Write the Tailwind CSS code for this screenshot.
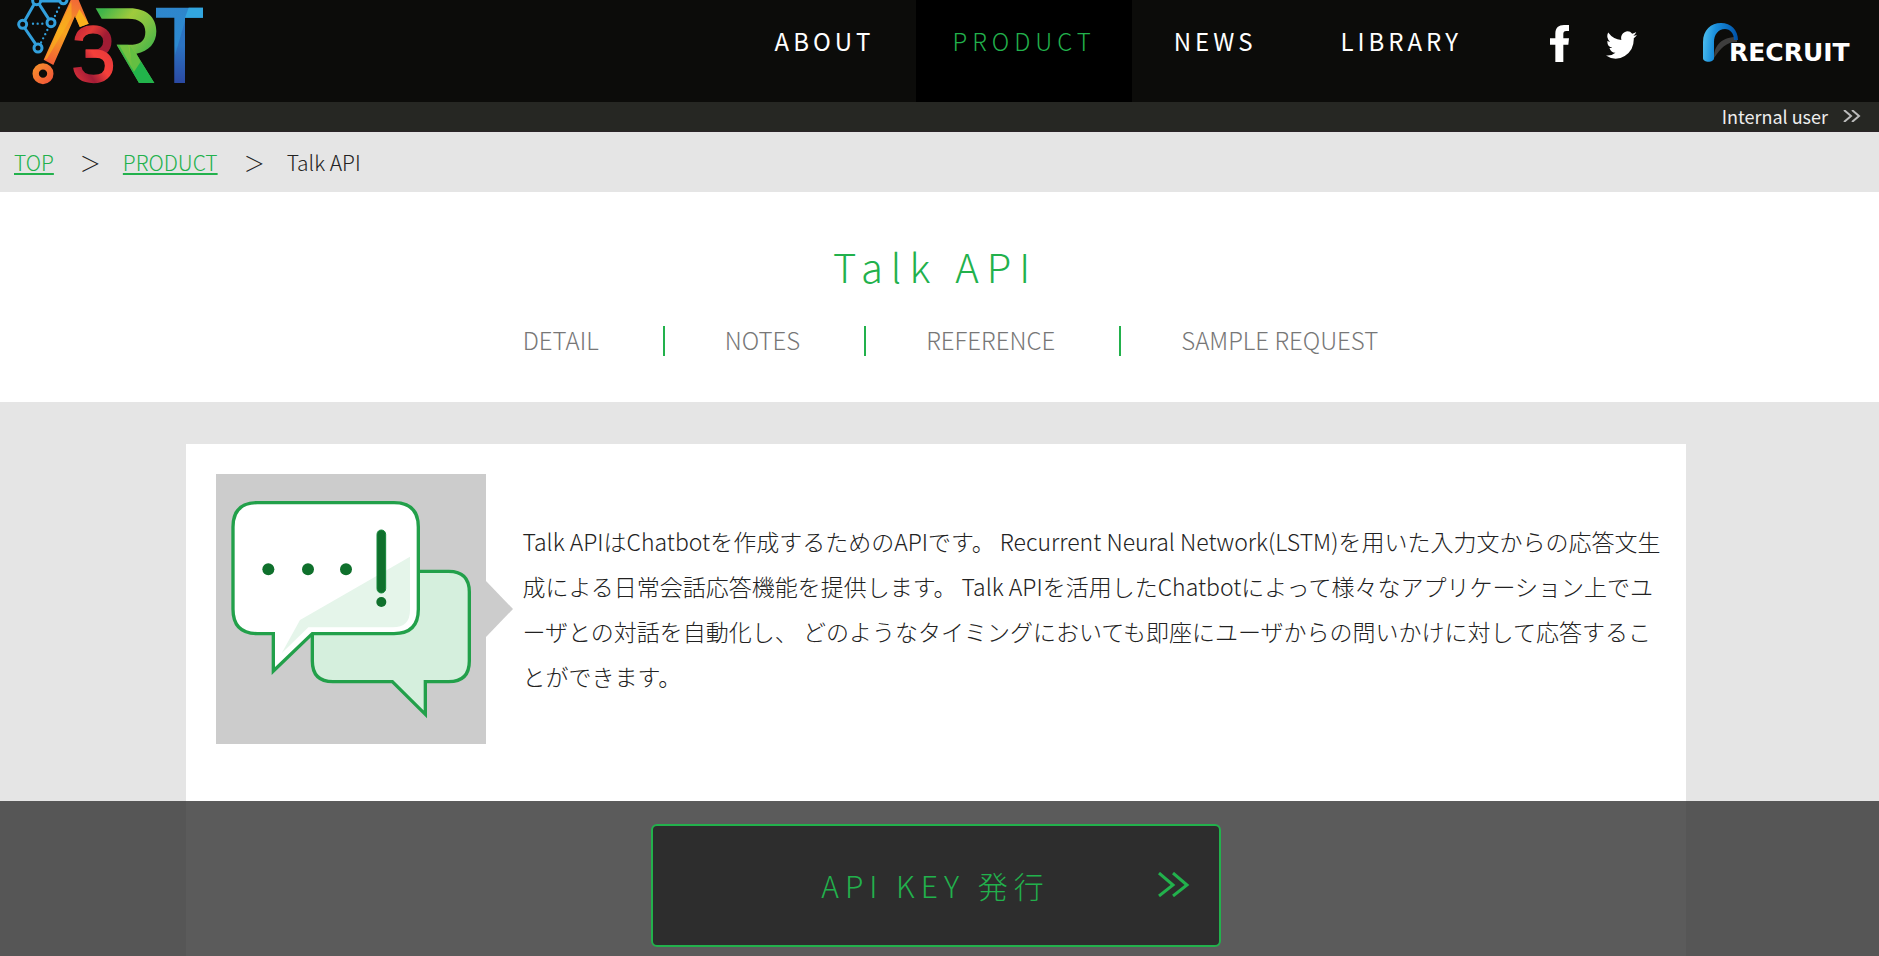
<!DOCTYPE html>
<html lang="ja">
<head>
<meta charset="utf-8">
<meta name="viewport" content="width=device-width, initial-scale=1">
<title>Talk API | A3RT</title>
<script src="https://cdn.jsdelivr.net/npm/@tailwindcss/browser@4"></script>
</head>
<body class="min-h-screen overflow-x-hidden bg-[#e5e5e5] font-['Noto_Sans_CJK_JP','Noto_Sans',sans-serif] font-light text-[#222]">

<header>
  <div class="flex h-[102px] items-start justify-between bg-[#0c0c0a] pr-6">
    <a href="#" aria-label="A3RT" class="block">
      <svg class="h-[102px] w-[220px]" viewBox="0 0 660 306" fill="none">
        <defs>
          <linearGradient id="a" x1="225" y1="0" x2="140" y2="190" gradientUnits="userSpaceOnUse"><stop stop-color="#f26a36"/><stop offset=".5" stop-color="#f8a51f"/><stop offset="1" stop-color="#f15a38"/></linearGradient>
          <linearGradient id="o" x1="100" y1="190" x2="160" y2="250" gradientUnits="userSpaceOnUse"><stop stop-color="#f7942a"/><stop offset="1" stop-color="#f1503a"/></linearGradient>
          <linearGradient id="t1" x1="230" y1="80" x2="330" y2="150" gradientUnits="userSpaceOnUse"><stop stop-color="#c3263a"/><stop offset=".35" stop-color="#e23a36"/><stop offset=".7" stop-color="#a01c34"/></linearGradient>
          <linearGradient id="t2" x1="340" y1="160" x2="220" y2="240" gradientUnits="userSpaceOnUse"><stop stop-color="#e5383a"/><stop offset=".35" stop-color="#f6403a"/><stop offset=".65" stop-color="#a21c36"/><stop offset="1" stop-color="#e0333a"/></linearGradient>
          <linearGradient id="r1" x1="300" y1="40" x2="440" y2="160" gradientUnits="userSpaceOnUse"><stop stop-color="#3fb54a"/><stop offset=".4" stop-color="#a0cb3c"/><stop offset=".7" stop-color="#7fc242"/><stop offset="1" stop-color="#4cb648"/></linearGradient>
          <linearGradient id="b1" x1="540" y1="25" x2="540" y2="248" gradientUnits="userSpaceOnUse"><stop stop-color="#2e86cc"/><stop offset=".5" stop-color="#2d8ad0"/><stop offset="1" stop-color="#2b4aa0"/></linearGradient>
        </defs>
        <g stroke="#32a0dc" stroke-width="9">
          <path d="M104 10 74 62M74 84l34 50M116 10l31 48M122 3h56"/>
          <circle cx="68" cy="73" r="12"/><circle cx="153" cy="68" r="12"/><circle cx="114" cy="144" r="12"/><circle cx="110" cy="2" r="12"/><circle cx="190" cy="0" r="11"/>
          <path stroke-width="7" stroke-linecap="round" stroke-dasharray="0 14" d="M99 71h42M165 48l18-38M142 90l-20 40"/>
        </g>
        <path fill="url(#a)" d="M212 0h24l30 71-27 10-14-32-65 146-29-16z"/>
        <path fill="#f9b81a" d="m215 52-74 124-9 4 82-176z" opacity=".55"/>
        <path fill="#fbb01c" d="m238 28-11 24 13 29 26-10z"/>
        <circle cx="129" cy="221" r="22" stroke="url(#o)" stroke-width="19"/>
        <path stroke="url(#t1)" stroke-width="25" d="M236 122C238 98 256 88 279 88c28 0 43 15 43 36 0 22-16 37-37 37h-28"/>
        <path stroke="url(#t2)" stroke-width="25" d="M257 161h30c24 0 40 14 40 36 0 24-18 40-46 40-29 0-46-12-49-35"/>
        <path fill="url(#r1)" d="M287 25h102c50 0 80 27 80 69 0 35-22 60-60 67l54 88h-46l-67-115h48c26-1 38-15 38-38 0-26-18-40-51-40h-80z"/>
        <path fill="#2fb34a" d="m350 134 35 0 16 88 16 27z" opacity=".75"/>
        <path fill="#22b34b" d="m388 134 20 27 55 88h-46l-20-35z"/>
        <path fill="#a5cc3a" d="m358 136 32-1 18 25 14 25-20 30z" opacity=".5"/>
        <path fill="url(#b1)" d="M468 23h141v30h-54v196h-32V53h-55z"/>
        <path fill="#32a6df" d="M566 23h43v30h-54z"/>
        <path fill="#2b4aa8" d="M555 53v10l-32 110v76h32z" opacity=".35"/>
      </svg>
    </a>
    <div class="flex items-start">
      <nav class="flex text-2xl leading-[82px] tracking-[4px] text-white" aria-label="Main">
        <a href="#" class="h-[102px] px-[42px] font-normal">ABOUT</a>
        <a href="#" class="h-[102px] bg-black px-9 tracking-[5px] text-[#22b14c]" aria-current="page">PRODUCT</a>
        <a href="#" class="h-[102px] px-[42px] font-normal">NEWS</a>
        <a href="#" class="h-[102px] px-[42px] font-normal">LIBRARY</a>
      </nav>
      <div class="flex items-start pt-[22px] pl-[46px]">
        <a href="#" aria-label="Facebook" class="mt-[3px]">
          <svg class="h-[37px] w-[19px]" viewBox="0 0 57 111" fill="#fff"><path d="M57 0v18H49c-8 0-9 4-9 10v12h17l-2 19H40v52H16V59H0V40h16V26C16 8 26 0 42 0z"/></svg>
        </a>
        <a href="#" aria-label="Twitter" class="mt-[9px] ml-[37px]">
          <svg class="h-7 w-[31px]" viewBox="0 2 24 20" preserveAspectRatio="none" fill="#fff"><path d="M24 4.600a10 10 0 0 1-2.800.8 5 5 0 0 0 2.200-2.700 10 10 0 0 1-3.100 1.200 4.900 4.900 0 0 0-8.400 4.500A14 14 0 0 1 1.700 3.100a4.900 4.900 0 0 0 1.500 6.600 5 5 0 0 1-2.200-.6 4.900 4.900 0 0 0 3.900 4.900 5 5 0 0 1-2.200.1 4.900 4.900 0 0 0 4.600 3.400A10 10 0 0 1 0 19.500 14 14 0 0 0 21.500 7.100 10 10 0 0 0 24 4.600z"/></svg>
        </a>
        <a href="#" aria-label="RECRUIT" class="ml-[66px]">
          <svg class="h-12 w-[152px]" viewBox="0 0 152 48">
            <defs>
              <linearGradient id="rc" x1="0" y1="10" x2="34" y2="14" gradientUnits="userSpaceOnUse"><stop stop-color="#4fc0ee"/><stop offset=".35" stop-color="#1a8fdc"/><stop offset="1" stop-color="#0052a8"/></linearGradient>
            </defs>
            <path fill="#3d3d3d" d="M11 36C11 22 20 15 34 15v5c-11 0-16 6-23 16z"/>
            <path fill="url(#rc)" d="M0 36V20C0 8 8 1 18 1s17 7 17 17h-4c0-7-4-11-9-11-7 0-11 6-11 13v16c0 5-11 5-11 0z"/>
            <text x="26" y="39" fill="#fff" font-family="DejaVu Sans" font-weight="700" font-size="25">RECRUIT</text>
          </svg>
        </a>
      </div>
    </div>
  </div>
  <div class="flex h-[30px] items-center justify-end border-b border-[#2a2428] bg-[#262723] pr-[18px] pb-0.5">
    <a href="#" class="flex items-center gap-[15px] text-lg leading-7 font-normal text-[#eee]">Internal user
      <svg class="h-3 w-[18px]" viewBox="0 0 18 12" fill="none" stroke="#bbb" stroke-width="2"><path d="m1 0 7 6-7 6M9 0l7 6-7 6"/></svg>
    </a>
  </div>
</header>

<nav aria-label="Breadcrumb" class="bg-[#e5e5e5]">
  <ol class="flex h-[60px] items-center pl-[14px] text-[21px] leading-8">
    <li><a href="#" class="text-[#22b14c] underline decoration-2 underline-offset-2">TOP</a></li>
    <li aria-hidden="true" class="w-[69px] pl-1 text-center">＞</li>
    <li><a href="#" class="text-[#22b14c] underline decoration-2 underline-offset-2">PRODUCT</a></li>
    <li aria-hidden="true" class="w-[69px] pl-1 text-center">＞</li>
    <li aria-current="page">Talk API</li>
  </ol>
</nav>

<main>
  <section class="flex h-[210px] flex-col items-center bg-white pt-11 pr-2">
    <h1 class="text-[40px] leading-[60px] font-light tracking-[8px] text-[#22b14c]">Talk API</h1>
    <ul class="mt-[30px] flex divide-x-2 divide-[#22b14c] pl-[34px] text-2xl leading-7 text-[#777]">
      <li class="pr-16 pb-0.5 pl-[60px]"><a href="#detail">DETAIL</a></li>
      <li class="pr-16 pb-0.5 pl-[60px]"><a href="#notes">NOTES</a></li>
      <li class="pr-16 pb-0.5 pl-[60px]"><a href="#reference">REFERENCE</a></li>
      <li class="pr-16 pb-0.5 pl-[60px]"><a href="#sample">SAMPLE REQUEST</a></li>
    </ul>
  </section>

  <div class="pt-[42px] pr-2">
    <article id="detail" class="mx-auto flex min-h-[512px] max-w-[1500px] items-start bg-white py-[30px] pr-[22px] pl-[30px]">
      <div class="flex shrink-0 items-center">
        <svg class="size-[270px] bg-[#ccc]" viewBox="0 0 810 810" fill="none" role="img" aria-label="Talk API">
          <g stroke="#22a04a" stroke-width="10">
            <path fill="#d5efdd" d="M350 292H698q62 0 62 62v207q0 62-62 62H628v98L529 623H351q-62 0-62-62V350z"/>
            <path fill="#fff" d="M124 86H534q73 0 73 73v247q0 73-73 73H289L172 591V479H124q-73 0-73-73V159q0-73 73-73z"/>
          </g>
          <path fill="#e5f5ea" d="M582 248v160q0 52-52 52H277l-80 78 55-100z"/>
          <g fill="#0f702c">
            <circle cx="157" cy="286" r="18"/><circle cx="276" cy="286" r="18"/><circle cx="390" cy="286" r="18"/><circle cx="496" cy="384" r="15"/>
            <rect x="483" y="168" width="26" height="189" rx="13" stroke="#15883a" stroke-width="3"/>
          </g>
        </svg>
        <svg class="h-14 w-[27px]" viewBox="0 0 27 56" fill="#ccc" aria-hidden="true"><path d="M0 0l27 28L0 56z"/></svg>
      </div>
      <p class="mt-[45px] ml-[10px] flex-1 text-[23px] leading-[45px]">Talk APIはChatbotを作成するためのAPIです。 Recurrent Neural Network(LSTM)を用いた入力文からの応答文生成による日常会話応答機能を提供します。 Talk APIを活用したChatbotによって様々なアプリケーション上でユーザとの対話を自動化し、 どのようなタイミングにおいても即座にユーザからの問いかけに対して応答することができます。</p>
    </article>
  </div>
</main>

<div class="fixed inset-x-0 bottom-0 flex h-[155px] justify-center bg-[#323232]/80 pt-[23px] pr-2">
  <button type="button" class="relative h-[123px] w-[570px] rounded-md border-2 border-[#22b14c] bg-[#2d2d2d] pb-0.5 text-3xl font-light tracking-[6px] text-[#22b14c]">API KEY 発行
    <svg class="absolute top-[46px] right-[29px] h-[25px] w-8" viewBox="0 0 32 25" fill="none" stroke="#22b14c" stroke-width="3"><path d="m1 1 14 12L1 24M15 1l14 12-14 11"/></svg>
  </button>
</div>

</body>
</html>
